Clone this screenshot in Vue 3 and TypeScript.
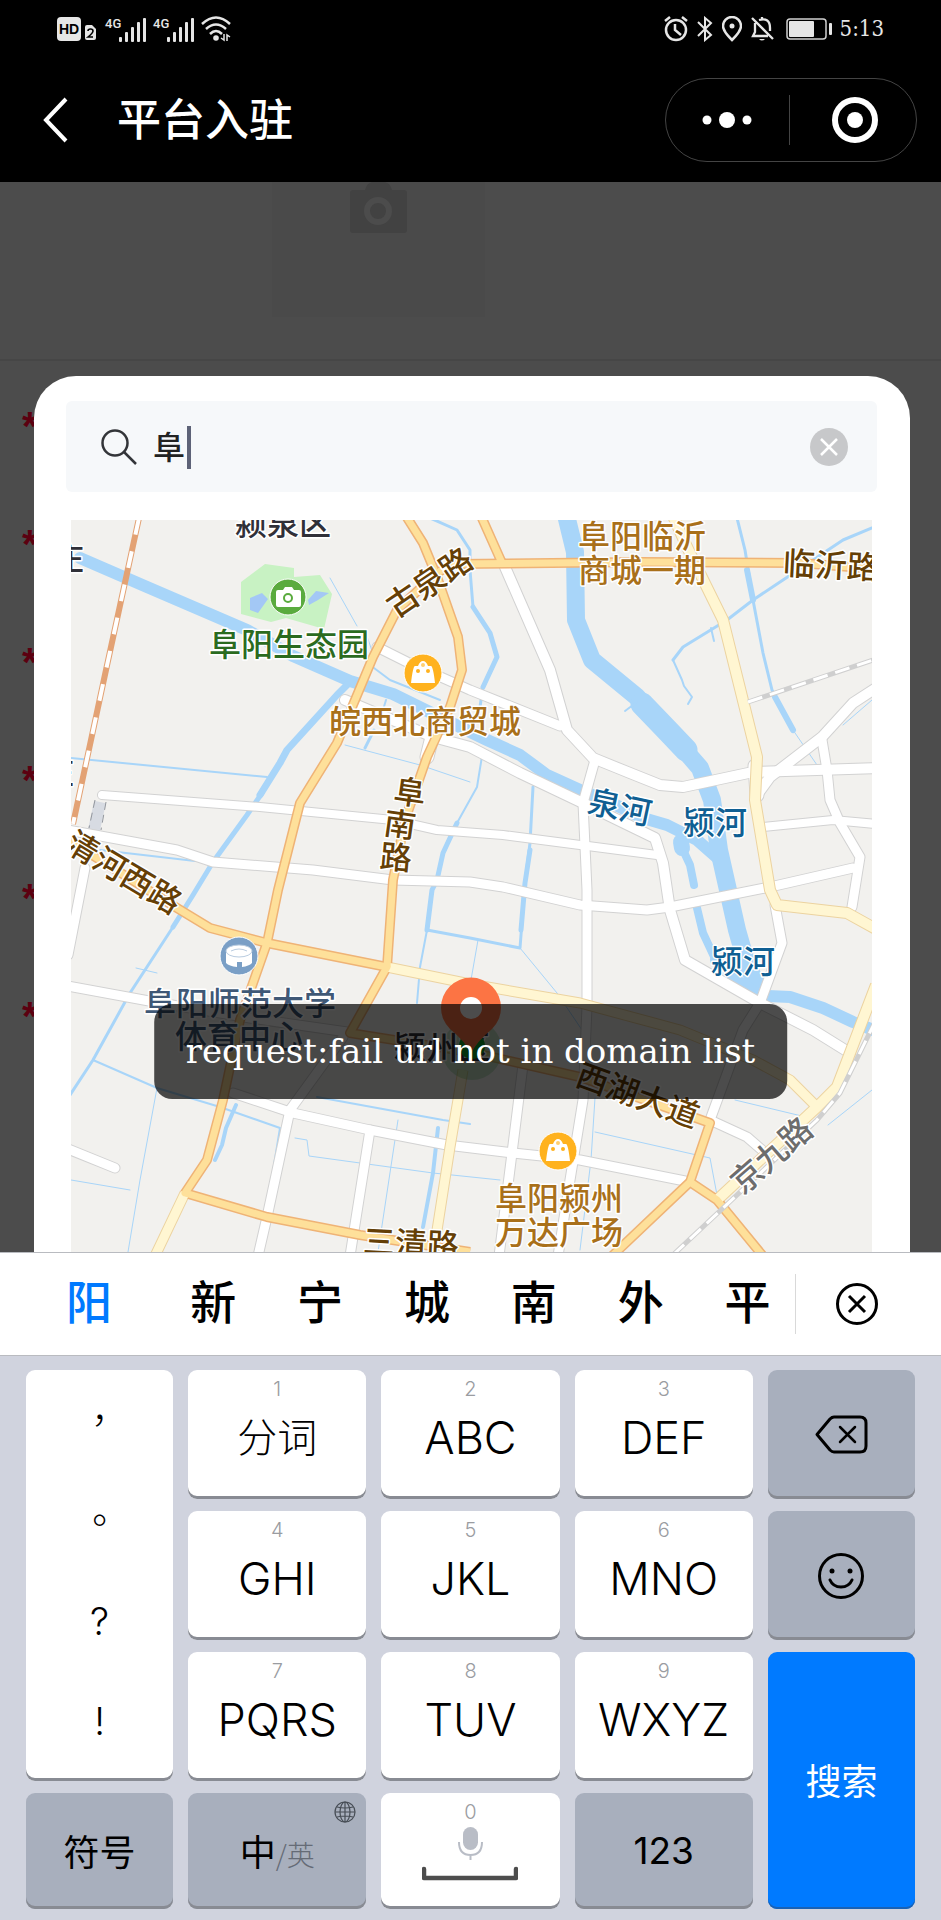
<script setup lang="ts">
import { ref } from 'vue'

interface Key { hint: string; label: string }
interface Label { x: number; y: number; text: string; kind: string; rotate?: number }
interface Line { d: string; w: number }

const keyword = ref('阜')
const candidates = ['阳', '新', '宁', '城', '南', '外', '平']
const punctuation = ['，', '。', '?', '!']
const keys: Key[] = [
  { hint: '1', label: '分词' }, { hint: '2', label: 'ABC' }, { hint: '3', label: 'DEF' },
  { hint: '4', label: 'GHI' }, { hint: '5', label: 'JKL' }, { hint: '6', label: 'MNO' },
  { hint: '7', label: 'PQRS' }, { hint: '8', label: 'TUV' }, { hint: '9', label: 'WXYZ' },
]
const bars = [5, 10, 15, 20, 24]

const water: Line[] = [
  { w: 12, d: 'M80 558L147 587L247 630L293 656L350 681L393 694L460 727L487 740L520 755L547 775L580 790L603 799L643 818L667 825L697 840L722 862' },
  { w: 18, d: 'M566 515L575 552L576 620L592 660L637 697L667 730L700 768L712 800L719 850L728 890L737 930L747 965L760 990' },
  { w: 23, d: 'M642 704L667 730L686 750' },
  { w: 7, d: 'M347 685L337 695L287 750L280 763L260 795' },
  { w: 5, d: 'M262 793L247 815L213 862L193 895L173 927' },
  { w: 3, d: 'M173 927L130 993L93 1060L68 1098' },
  { w: 3, d: 'M430 518L457 530L470 550L470 570L473 607L490 633L497 657L483 687L480 707' },
  { w: 5, d: 'M473 607L490 633L497 657L483 687' },
  { w: 2, d: 'M483 750L477 787L457 823L443 853' },
  { w: 5, d: 'M457 823L443 853L437 880L432 890L427 930' },
  { w: 2, d: 'M427 930L420 967L417 1003' },
  { w: 3, d: 'M533 787L530 843L525 883L520 948L470 938L427 930' },
  { w: 5, d: 'M530 850L525 883L521 930' },
  { w: 1, d: 'M520 948L557 993L582 1030M478 940L471 980' },
  { w: 3, d: 'M737 518L745 550L753 600L763 653L772 690L793 730' },
  { w: 6, d: 'M747 570L753 600M775 697L793 730' },
  { w: 1, d: 'M793 730L817 765M872 700L843 725M330 578L357 626M365 630L375 660' },
  { w: 3, d: 'M872 528L843 540L783 580L753 600L727 620L683 647L673 660' },
  { w: 2, d: 'M673 660L682 680L684 686L692 697L688 704M711 628L714 641M637 702L625 711' },
  { w: 2, d: 'M71 758L267 777M100 850L195 861M370 665L390 680L440 700M386 700L383 710' },
  { w: 3, d: 'M374 730L365 748' },
  { w: 1, d: 'M345 745L420 765L470 782' },
  { w: 16, d: 'M681 842L682 848' },
  { w: 8, d: 'M683 850L690 865L694 885M697 908L703 933L717 963' },
  { w: 12, d: 'M716 960L732 978L765 998' },
  { w: 12, d: 'M768 996L790 997L823 1008L853 1022L876 1031' },
  { w: 2, d: 'M93 1060L157 1088L220 1107L280 1128L260 1252M317 1097L443 1120L470 1124' },
  { w: 1, d: 'M157 1088L140 1180L128 1252M295 1138L307 1140L309 1156L433 1173L500 1180M398 1120L378 1252M136 968L157 973' },
  { w: 4, d: 'M236 1105L226 1128L222 1145L215 1160M438 1128L433 1173L423 1227' },
  { w: 1, d: 'M735 1100L810 1118M595 1098L591 1160L580 1250M595 1132L710 1158L717 1195M828 1125L872 1090M71 1180L130 1190' },
]

const white: Line[] = [
  { w: 8, d: 'M102 795L260 807L393 820L437 830L503 835L657 855' },
  { w: 9, d: 'M68 830L177 850L213 862L313 870L393 880L470 882L503 887L580 905L647 910L670 907L770 887L853 868' },
  { w: 9, d: 'M377 647L407 662L470 690L560 726' },
  { w: 10, d: 'M505 567L550 670L567 730L593 758L630 773L660 785L683 787L753 772L876 768' },
  { w: 10, d: 'M345 700L433 737L470 747L520 773L583 803L655 838L663 863L670 910L685 960L760 1003L813 1030L850 1053' },
  { w: 9, d: 'M595 760L583 803L587 890L587 1007L583 1100L570 1180L558 1256' },
  { w: 10, d: 'M876 688L853 703L822 737L770 777L757 795' },
  { w: 9, d: 'M822 740L827 770L830 800L840 823L860 857L852 907' },
  { w: 8, d: 'M763 827L833 820L876 824' },
  { w: 9, d: 'M775 905L782 943L760 1003L743 1030L710 1120L747 1137L770 1157' },
  { w: 9, d: 'M68 986L160 1003L250 1018L347 1032' },
  { w: 9, d: 'M233 1093L293 1113L370 1130L447 1145L513 1153L580 1160L690 1182' },
  { w: 9, d: 'M343 1037L290 1110L267 1217L258 1256M370 1130L350 1256M523 1065L512 1153L499 1256' },
  { w: 9, d: 'M68 1149L115 1168M85 868L68 955' },
  { w: 13, d: 'M432 737L427 757M755 766L757 795' },
]

const pale: Line[] = [
  { w: 10, d: 'M673 516L687 547L723 620L757 757L755 800L770 890L777 905L847 913L876 929' },
  { w: 10, d: 'M876 985L850 1053L837 1087L817 1107L717 1200' },
  { w: 9, d: 'M387 967L470 984L580 1003L680 1030L753 1060L790 1080L817 1107' },
  { w: 9, d: 'M463 1070L450 1147L433 1256M185 1193L155 1256' },
]

const orange: Line[] = [
  { w: 9, d: 'M406 516L423 543L437 577L458 637L462 670L450 707L427 757L405 820L393 880L387 967' },
  { w: 9, d: 'M455 563L437 573L397 610L373 657L337 743L300 803L278 890L267 943L240 1020L223 1100L207 1160L185 1193L267 1217L360 1235L470 1252' },
  { w: 9, d: 'M481 516L502 563M455 564L640 562L800 563L876 569' },
  { w: 9, d: 'M68 840L177 908L210 928L267 943L387 967L350 1033L470 1052L580 1077L710 1123L690 1182L612 1256M690 1182L717 1200L763 1256' },
]

const labels: Label[] = [
  { x: 283, y: 535, text: '颍泉区', kind: 'dark' },
  { x: 68, y: 570, text: '庄', kind: 'dark' },
  { x: 58, y: 784, text: '庄', kind: 'dark' },
  { x: 289, y: 656, text: '阜阳生态园', kind: 'green' },
  { x: 425, y: 733, text: '皖西北商贸城', kind: 'brown' },
  { x: 642, y: 548, text: '阜阳临沂', kind: 'brown' },
  { x: 642, y: 582, text: '商城一期', kind: 'brown' },
  { x: 831, y: 577, text: '临沂路', kind: 'road', rotate: 3 },
  { x: 429, y: 594, text: '古泉路', kind: 'road', rotate: -34 },
  { x: 124, y: 884, text: '清河西路', kind: 'road', rotate: 31 },
  { x: 410, y: 804, text: '阜', kind: 'road', rotate: 8 },
  { x: 400, y: 836, text: '南', kind: 'road', rotate: 8 },
  { x: 396, y: 869, text: '路', kind: 'road', rotate: 5 },
  { x: 620, y: 819, text: '泉河', kind: 'river', rotate: 12 },
  { x: 715, y: 834, text: '颍河', kind: 'river' },
  { x: 743, y: 973, text: '颍河', kind: 'river' },
  { x: 240, y: 1015, text: '阜阳师范大学', kind: 'blue' },
  { x: 239, y: 1048, text: '体育中心', kind: 'blue' },
  { x: 442, y: 1059, text: '颍州区', kind: 'dark' },
  { x: 638, y: 1107, text: '西湖大道', kind: 'road', rotate: 20 },
  { x: 771, y: 1167, text: '京九路', kind: 'rail', rotate: -41 },
  { x: 559, y: 1210, text: '阜阳颍州', kind: 'brown' },
  { x: 559, y: 1244, text: '万达广场', kind: 'brown' },
  { x: 411, y: 1255, text: '三清路', kind: 'road', rotate: 3 },
]
const turn = (l: Label) => (l.rotate ? `rotate(${l.rotate} ${l.x} ${l.y - 12})` : undefined)
</script>

<template>
  <div class="phone">
    <header class="top">
      <div class="status">
        <div class="status-side">
          <span class="hd">HD</span>
          <svg class="sim" width="11" height="15" viewBox="0 0 11 15"><path d="M0 2Q0 0 2 0H7L11 4V13Q11 15 9 15H2Q0 15 0 13Z" fill="#e6e6e6" /><path d="M3 6Q3 4 5.500 4T8 6Q8 8 3 12H8" fill="none" stroke="#000" stroke-width="1.600" /></svg>
          <div v-for="n in 2" :key="n" class="signal">
            <span class="net">4G</span>
            <svg width="27" height="25" viewBox="0 0 27 25"><rect v-for="(h, i) in bars" :key="h" :x="i * 6" :y="25 - h" width="3" :height="h" rx="1" fill="#e6e6e6" /></svg>
          </div>
          <svg width="30" height="26" viewBox="0 0 30 26" fill="none" stroke="#e6e6e6" stroke-width="2.500"><path d="M1 8Q15 -5 29 8M5 13Q15 4 25 13M9 18Q15 12 21 18" /><circle cx="15" cy="22" r="2.800" fill="#e6e6e6" stroke="none" /><path d="M23 18V24L20 22M26 25V19L29 21" stroke-width="1.500" /></svg>
        </div>
        <div class="status-side right">
          <svg width="24" height="26" viewBox="0 0 24 26" fill="none" stroke="#e6e6e6" stroke-width="2.500"><circle cx="12" cy="14" r="10" /><path d="M11 8V14L17 19M1 5L6 1M23 5L18 1" /></svg>
          <svg width="16" height="26" viewBox="0 0 16 26" fill="none" stroke="#e6e6e6" stroke-width="2"><path d="M1 6L14 19L8 24V2L14 7L1 20" /></svg>
          <svg width="20" height="26" viewBox="0 0 20 26" fill="none" stroke="#e6e6e6" stroke-width="2.500"><path d="M10 24Q1 15 1 10A9 9 0 0 1 19 10Q19 15 10 24Z" /><circle cx="10" cy="10" r="2.500" fill="#e6e6e6" stroke="none" /></svg>
          <svg width="23" height="26" viewBox="0 0 23 26" fill="none" stroke="#e6e6e6" stroke-width="2.300"><path d="M1 2L22 23M4 7V16L2 20H17M8 4Q19 1 19 12V15M11 1V4" /><path d="M8 23H14Q11 26 8 23Z" fill="#e6e6e6" stroke="none" /></svg>
          <svg class="battery" width="47" height="22" viewBox="0 0 47 22"><rect x="1" y="1" width="39" height="20" rx="3" fill="none" stroke="#cfcfcf" stroke-width="1.500" /><rect x="3" y="3" width="25" height="16" rx="1" fill="#e6e6e6" /><rect x="43" y="5" width="3" height="12" rx="1" fill="#e6e6e6" /></svg>
          <time>5:13</time>
        </div>
      </div>
      <nav class="nav">
        <button class="back" aria-label="返回"><svg width="26" height="46" viewBox="0 0 26 46"><path d="M23 2L3 23L23 44" fill="none" stroke="#fff" stroke-width="4" /></svg></button>
        <h1>平台入驻</h1>
        <div class="capsule">
          <button aria-label="更多"><svg width="50" height="18" viewBox="0 0 50 18" fill="#fff"><circle cx="5" cy="9" r="4.500" /><circle cx="25" cy="9" r="8" /><circle cx="45" cy="9" r="4.500" /></svg></button>
          <button aria-label="关闭小程序"><svg width="48" height="48" viewBox="0 0 48 48"><circle cx="24" cy="24" r="20" fill="none" stroke="#fff" stroke-width="6" /><circle cx="24" cy="24" r="8" fill="#fff" /></svg></button>
        </div>
      </nav>
    </header>

    <main class="stage">
      <div class="form" aria-hidden="true">
        <div class="upload">
          <div class="tile"><svg width="57" height="51" viewBox="0 0 57 51"><path d="M3 8H15Q17 1 22 0H35Q40 1 42 8H54Q57 8 57 11V48Q57 51 54 51H3Q0 51 0 48V11Q0 8 3 8Z" fill="#424242" /><circle cx="28" cy="29" r="11" fill="none" stroke="#4c4c4c" stroke-width="6" /></svg></div>
        </div>
        <div v-for="n in 6" :key="n" class="row">*</div>
      </div>

      <section class="dialog">
        <div class="search">
          <svg class="glass" width="36" height="36" viewBox="0 0 36 36" fill="none" stroke="#333539" stroke-width="2.500"><circle cx="14" cy="14" r="12.500" /><path d="M23 23L35 35" /></svg>
          <div class="field">
            <input v-model="keyword" type="text" aria-label="搜索地点" />
            <span class="caret"></span>
          </div>
          <button class="clear" aria-label="清空" @click="keyword = ''"><svg width="38" height="38" viewBox="0 0 38 38"><circle cx="19" cy="19" r="19" fill="#c7c8ca" /><path d="M11 11L27 27M27 11L11 27" stroke="#fff" stroke-width="2.500" /></svg></button>
        </div>

        <svg class="map" viewBox="71 520 801 732" role="img" aria-label="地图">
          <rect x="71" y="520" width="801" height="732" fill="#f2f1ee" />
          <path d="M241 582L265 564L294 568V577L320 575L332 594L324 629L286 618L271 622L241 614Z" fill="#c8f2c3" />
          <path d="M250 598L262 593L268 599L258 613L250 610ZM308 600L316 591L329 593L318 600L309 605Z" fill="#a3c8f5" />
          <g fill="none" stroke="#a8d5f9" stroke-linejoin="round" stroke-linecap="round"><path v-for="(l, i) in water" :key="i" :d="l.d" :stroke-width="l.w" /></g>
          <path d="M100 802L94 830" stroke="#d7dbe2" stroke-width="12" />
          <path d="M95 800L89 828M106 802L101 830M82 866L76 890" stroke="#93979d" stroke-width="1" stroke-dasharray="8 5" />
          <g fill="none" stroke="#d2d2d2" stroke-linejoin="round" stroke-linecap="round"><path v-for="(l, i) in white" :key="i" :d="l.d" :stroke-width="l.w + 2" /></g>
          <g fill="none" stroke="#fff" stroke-linejoin="round" stroke-linecap="round"><path v-for="(l, i) in white" :key="i" :d="l.d" :stroke-width="l.w" /></g>
          <g fill="none" stroke-linejoin="round">
            <path v-for="(l, i) in pale" :key="'a' + i" :d="l.d" :stroke-width="l.w + 2" stroke="#ecd3a0" />
            <path v-for="(l, i) in orange" :key="'b' + i" :d="l.d" :stroke-width="l.w + 1" stroke="#efb376" />
            <path v-for="(l, i) in pale" :key="'c' + i" :d="l.d" :stroke-width="l.w" stroke="#fff6d2" />
            <path v-for="(l, i) in orange" :key="'d' + i" :d="l.d" :stroke-width="l.w - 2" stroke="#fee09a" />
          </g>
          <path d="M139 518L106 670L73 824" fill="none" stroke="#e3a274" stroke-width="6" />
          <path d="M139 518L106 670L73 824" fill="none" stroke="#fff" stroke-width="4" stroke-dasharray="17 17" />
          <g fill="none"><path d="M748 702L876 659M876 1020L840 1093L817 1120L674 1254" stroke="#cfcfcf" stroke-width="5" /><path d="M748 702L876 659M876 1020L840 1093L817 1120L674 1254" stroke="#fff" stroke-width="3" stroke-dasharray="15 8" /></g>
          <g stroke="#fff" stroke-width="1">
            <circle cx="288" cy="597" r="18" fill="#5aab3e" /><circle cx="423" cy="673" r="19" fill="#ffb21e" /><circle cx="558" cy="1151" r="19" fill="#ffb21e" /><circle cx="239" cy="956" r="19" fill="#7a9fc6" />
          </g>
          <g fill="#fff"><path d="M278 590H283L285 587H292L294 590H299Q301 590 301 592V605Q301 607 299 607H278Q276 607 276 605V592Q276 590 278 590Z" /><circle cx="288" cy="598" r="4" fill="#fff" stroke="#5aab3e" stroke-width="2" /></g>
          <g v-for="p in [[423, 673], [558, 1151]]" :key="p[0]" :transform="`translate(${p[0]} ${p[1]})`"><path d="M-8 -7H-5Q-3 -12 0 -12T5 -7H8Q10 -7 12 10H-12Q-10 -7 -8 -7Z" fill="#fff" /><circle cx="-5" cy="-2" r="2" fill="#ffb21e" /><circle cx="5" cy="-2" r="2" fill="#ffb21e" /><circle cx="0" cy="-8" r="2" fill="#ffcf70" /></g>
          <path d="M226 951H252V963Q249 966 242 967V962H237V967Q229 966 226 963Z" fill="#fff" /><ellipse cx="239" cy="951" rx="13" ry="6" fill="#fff" stroke="#b9cce0" stroke-width="1" /><path d="M231 951Q239 947 247 951" fill="none" stroke="#b9cce0" stroke-width="1" />
          <circle cx="472" cy="1050" r="30" fill="#4fb365" opacity=".3" />
          <g class="labels"><text v-for="(l, i) in labels" :key="i" :x="l.x" :y="l.y" :class="l.kind" :transform="turn(l)">{{ l.text }}</text></g>
          <circle cx="472" cy="1046" r="13" fill="#0ca62c" />
          <path d="M471 1054Q466 1042 450 1029A30 30 0 1 1 492 1029Q476 1042 471 1054Z" fill="#fc7444" /><circle cx="471" cy="1008" r="11" fill="#fff" />
        </svg>
      </section>

      <div class="toast" role="status">request:fail url not in domain list</div>
    </main>

    <section class="keyboard">
      <div class="suggest">
        <div class="words"><button v-for="c in candidates" :key="c">{{ c }}</button></div>
        <button class="dismiss" aria-label="关闭候选"><svg width="44" height="44" viewBox="0 0 44 44" fill="none" stroke="#000" stroke-width="3"><circle cx="22" cy="22" r="19.500" /><path d="M14 14L30 30M30 14L14 30" /></svg></button>
      </div>
      <div class="pad">
        <div class="key punct"><button v-for="p in punctuation" :key="p">{{ p }}</button></div>
        <button v-for="k in keys" :key="k.hint" class="key letter"><small>{{ k.hint }}</small><span>{{ k.label }}</span></button>
        <button class="key fn erase" aria-label="删除"><svg width="53" height="39" viewBox="0 0 53 39" fill="none" stroke="#000" stroke-linejoin="round" stroke-linecap="round"><path d="M19 2H45Q51 2 51 8V31Q51 37 45 37H19Q17 37 15 35L2 19.500L15 4Q17 2 19 2Z" stroke-width="3" /><path d="M25 12L40 27M40 12L25 27" stroke-width="2.500" /></svg></button>
        <button class="key fn emoji" aria-label="表情"><svg width="46" height="46" viewBox="0 0 46 46" fill="none" stroke="#000" stroke-width="3" stroke-linecap="round"><circle cx="23" cy="23" r="21.500" /><path d="M12 27Q15 34 23 34T34 27" /><circle cx="14" cy="18" r="2.500" fill="#000" stroke="none" /><circle cx="32" cy="18" r="2.500" fill="#000" stroke="none" /></svg></button>
        <button class="key go">搜索</button>
        <button class="key fn symbols">符号</button>
        <button class="key fn lang"><span>中</span><em>/英</em>
          <svg class="globe" width="22" height="22" viewBox="0 0 22 22" fill="none" stroke="#474d55" stroke-width="1.200"><circle cx="11" cy="11" r="10" /><ellipse cx="11" cy="11" rx="5" ry="10" /><path d="M11 1V21M1 11H21M3 6Q11 8 19 6M3 16Q11 14 19 16" /></svg>
        </button>
        <button class="key space"><small>0</small>
          <svg width="96" height="54" viewBox="0 0 96 54" fill="none"><rect x="41" y="0" width="15" height="23" rx="7.500" fill="#b9bdc6" /><path d="M37 15Q37 28 48.500 28T60 15M48.500 28V33" stroke="#b9bdc6" stroke-width="2" /><path d="M2 42V51H94V42" stroke="#4d4d4d" stroke-width="4.500" stroke-linecap="round" stroke-linejoin="round" /></svg>
        </button>
        <button class="key fn digits">123</button>
      </div>
    </section>
  </div>
</template>

<style>
body { background: #d0d3de; }
</style>

<style scoped>
* { box-sizing: border-box; }
button { border: 0; padding: 0; margin: 0; background: none; color: inherit; font: inherit; cursor: pointer; }
svg { display: block; flex: none; }
.phone { min-height: 100vh; display: flex; flex-direction: column; font-family: "Liberation Sans", "Noto Sans CJK SC", sans-serif; color: #000; }
.top { background: #000; color: #fff; padding-bottom: 20px; }
.status { display: flex; justify-content: space-between; align-items: center; height: 58px; padding: 0 57px; color: #e6e6e6; }
.status-side { display: flex; align-items: center; }
.right { gap: 9px; }
.hd { width: 24px; height: 24px; border-radius: 4px; background: #e6e6e6; color: #000; font: bold 14px/24px "Liberation Sans", sans-serif; text-align: center; }
.sim { margin: 6px 9px 0 4px; }
.signal { display: flex; margin-right: 7px; }
.net { font: 500 13px/13px Roboto, sans-serif; width: 14px; white-space: nowrap; }
.battery { margin-left: 3px; }
time { font: 22px/26px "DejaVu Serif Condensed", "DejaVu Serif", serif; margin-left: -2px; }
.nav { display: flex; align-items: center; height: 104px; padding: 20px 24px 0 43px; }
h1 { margin: 0 auto 0 48px; padding-bottom: 6px; font: 500 44px/56px "Noto Sans CJK SC", sans-serif; }
.capsule { display: flex; align-items: center; width: 252px; height: 84px; border: 1px solid #444; border-radius: 42px; }
.capsule button { flex: 1 1 0; height: 50px; display: flex; align-items: center; justify-content: center; }
.capsule button + button { border-left: 1px solid #444; padding-left: 4px; }
.stage { flex: 1; display: grid; position: relative; background: #4c4c4c; overflow: hidden; }
.stage > .form, .stage > .dialog { grid-area: 1 / 1; }
.form { overflow: hidden; }
.upload { height: 179px; border-bottom: 2px solid #464646; display: flex; justify-content: center; padding-right: 184px; }
.tile { width: 213px; height: 135px; background: #4a4a4a; display: flex; justify-content: center; align-items: flex-start; }
.row { height: 118px; padding-left: 22px; color: #5c0010; font: bold 40px/130px "Liberation Sans", sans-serif; }
.dialog { margin: 194px 31px 0 34px; padding: 25px 33px 0 32px; background: #fff; border-radius: 42px 42px 0 0; }
.search { display: flex; align-items: center; height: 91px; padding: 0 29px 0 35px; margin-bottom: 28px; background: #f6f8fa; border-radius: 6px; }
.field { position: relative; flex: 1; margin-left: 16px; }
.field input { display: block; width: 100%; border: 0; padding: 0 0 4px; outline: 0; background: none; color: #222; font: 500 32px/42px "Noto Sans CJK SC", sans-serif; }
.caret { position: absolute; left: 34px; top: 2px; width: 4px; height: 43px; background: #5d6277; }
.map { width: calc(100% - 10px); height: auto; margin-left: 5px; }
.labels { font: 500 32px "Noto Sans CJK SC", sans-serif; text-anchor: middle; paint-order: stroke; stroke: #fff; stroke-width: 3px; stroke-linejoin: round; }
.dark { fill: #303038; } .green { fill: #2b6b1f; } .brown { fill: #a9701a; } .road { fill: #653f06; }
.river { fill: #0f5f93; } .blue { fill: #3f5876; } .rail { fill: #6d6d6d; }
.toast { position: absolute; left: 50%; top: 822px; transform: translateX(-50%); height: 95px; padding: 0 32px; border-radius: 18px; background: rgba(0, 0, 0, .7); color: #fff; font: 34px/95px "DejaVu Serif", serif; white-space: nowrap; }
.keyboard { background: #d0d3de; }
.suggest { display: grid; grid-template-columns: 801fr 140fr; height: 104px; background: #fff; border: solid #b9bbc0; border-width: 1px 0; }
.words { display: grid; grid-template-columns: 142fr repeat(6, 107fr); padding-left: 18px; font: 500 46px/92px "Noto Sans CJK SC", sans-serif; }
.words button { height: 92px; }
.words button:first-child { color: #007aff; }
.dismiss { display: flex; align-items: center; justify-content: center; margin-left: -6px; padding-right: 22px; background: linear-gradient(#d9d9d9, #d9d9d9) 0 50% / 1px 60px no-repeat; }
.pad { display: grid; grid-template-columns: 147fr repeat(3, 178fr) 147fr; grid-template-rows: repeat(3, 129px) 116px; gap: 12px 15px; padding: 14px 26px 12px; }
.key { border-radius: 9px; background: #fff; box-shadow: inset 0 -3px #888b93; }
.letter, .space { display: flex; flex-direction: column; align-items: center; }
.key small { margin-top: 8px; font: 300 20px/22px Inter, sans-serif; color: #9a9ca1; }
.letter span { margin-top: 10px; font: 300 45px/56px Inter, "Noto Sans CJK SC", sans-serif; }
.letter:nth-child(2) span { font-size: 40px; }
.punct { grid-area: 1 / 1 / 4 / 2; display: flex; flex-direction: column; font: 300 38px/44px Inter, "Noto Sans CJK TC", sans-serif; padding-bottom: 10px; }
.punct button { flex: 1; }
.fn { background: #a8afbd; display: flex; align-items: center; justify-content: center; font: 400 36px/44px "Noto Sans CJK SC", sans-serif; padding-bottom: 3px; }
.erase { grid-area: 1 / 5; padding-bottom: 0; }
.emoji { grid-area: 2 / 5; padding-bottom: 0; }
.go { grid-area: 3 / 5 / 5 / 6; background: #007aff; color: #fff; font: 400 36px/44px "Noto Sans CJK SC", sans-serif; box-shadow: inset 0 -2px #1a62b5; padding-bottom: 4px; }
.symbols { grid-area: 4 / 1; }
.lang { grid-area: 4 / 2; position: relative; }
.lang em { font: 300 28px/44px "Noto Sans CJK SC", sans-serif; color: #656b76; padding-top: 8px; }
.globe { position: absolute; top: 8px; right: 10px; }
.space { grid-area: 4 / 3; }
.space svg { margin-top: 4px; }
.digits { grid-area: 4 / 4; font: 400 37px/44px Inter, sans-serif; padding-bottom: 0; }
.letter:nth-child(2), .letter:nth-child(5), .letter:nth-child(8) { grid-column: 2; }
.letter:nth-child(3), .letter:nth-child(6), .letter:nth-child(9) { grid-column: 3; }
.letter:nth-child(4), .letter:nth-child(7), .letter:nth-child(10) { grid-column: 4; }
</style>
